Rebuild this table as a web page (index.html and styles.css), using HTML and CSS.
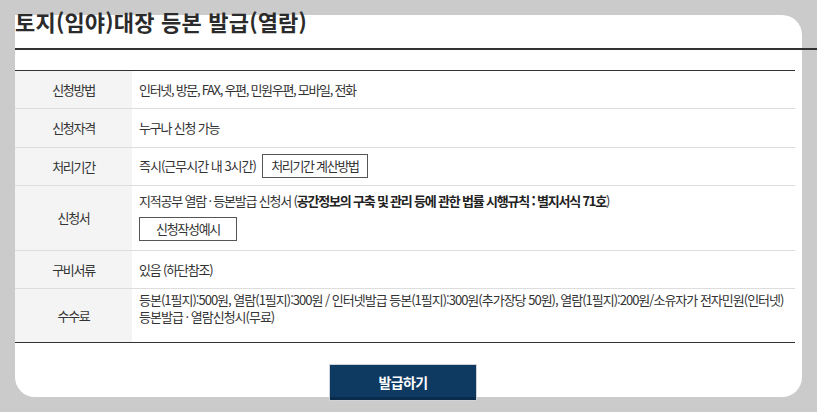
FILE: index.html
```html
<!DOCTYPE html>
<html lang="ko">
<head>
<meta charset="utf-8">
<title>토지(임야)대장 등본 발급(열람)</title>
<link rel="stylesheet" href="styles.css">
</head>
<body>
<div class="card">
  <h2 class="title">토지(임야)대장 등본 발급(열람)</h2>
  <table class="info">
    <tr>
      <th>신청방법</th>
      <td class="tight">인터넷, 방문, FAX, 우편, 민원우편, 모바일, 전화</td>
    </tr>
    <tr>
      <th>신청자격</th>
      <td>누구나 신청 가능</td>
    </tr>
    <tr>
      <th>처리기간</th>
      <td class="with-btn">
        <div class="inline-row">
          <span class="loose">즉시(근무시간 내 3시간)</span>
          <button class="small-btn calc">처리기간 계산방법</button>
        </div>
      </td>
    </tr>
    <tr>
      <th>신청서</th>
      <td class="form">
        <div class="form-line">지적공부 열람 · 등본발급 신청서 (<strong>공간정보의 구축 및 관리 등에 관한 법률 시행규칙 : 별지서식 71호</strong>)</div>
        <button class="small-btn example">신청작성예시</button>
      </td>
    </tr>
    <tr>
      <th>구비서류</th>
      <td>있음 (하단참조)</td>
    </tr>
    <tr class="last">
      <th>수수료</th>
      <td class="fee">등본(1필지):500원, 열람(1필지):300원 / 인터넷발급 등본(1필지):300원(추가장당 50원), 열람(1필지):200원/소유자가 전자민원(인터넷)<br>등본발급 · 열람신청시(무료)</td>
    </tr>
  </table>
  <div class="actions">
    <button class="issue">발급하기</button>
  </div>
</div>
</body>
</html>
```

FILE: styles.css
```css
html, body {
  margin: 0;
  padding: 0;
}

body {
  background: #cbcbcb;
  font-family: "Noto Sans CJK KR", "Noto Sans", sans-serif;
  color: #333;
  width: 817px;
  height: 412px;
  overflow: hidden;
}

.card {
  display: flex;
  flex-direction: column;
  margin: 15px 0 0 15px;
  width: 787px;
  height: 382px;
  background: #fff;
  border-radius: 0 20px 20px 20px;
}

.title {
  margin: -9px -15px 0 0;
  padding: 0 0 12px 0;
  font-size: 22px;
  line-height: 30px;
  font-weight: 700;
  letter-spacing: 0.2px;
  color: #2b2b2b;
  border-bottom: 2px solid #333;
}

.info {
  margin-top: 20px;
  width: 780px;
  border-collapse: separate;
  border-spacing: 0;
  border-top: 1px solid #333;
  font-size: 13px;
  letter-spacing: -1.2px;
}

.info th,
.info td {
  border-bottom: 1px solid #ddd;
  line-height: 17.4px;
  padding: 10px 7px;
  vertical-align: middle;
}

.info th {
  width: 103px;
  background: #f4f4f4;
  font-weight: 400;
  text-align: center;
  color: #333;
  letter-spacing: -1.3px;
}

.info td {
  text-align: left;
  color: #333;
}

.info td.tight {
  letter-spacing: -1.3px;
}

.loose {
  letter-spacing: -1px;
}

.info tr.last th,
.info tr.last td {
  border-bottom-color: #333;
}

.info strong {
  font-weight: 700;
  color: #222;
}

.info td.with-btn {
  padding: 6px 7px 7.4px;
}

.inline-row {
  display: flex;
  align-items: center;
  gap: 6px;
  height: 24px;
}

.small-btn {
  box-sizing: border-box;
  height: 24px;
  padding: 0;
  background: #fff;
  border: 1px solid #555;
  font-family: inherit;
  font-size: 13px;
  letter-spacing: -1.3px;
  color: #333;
  line-height: 22px;
  text-align: center;
}

.small-btn.calc {
  width: 106px;
}

.small-btn.example {
  width: 98px;
  margin-top: 7px;
  display: block;
}

.info td.form {
  padding: 6px 7px 8.3px;
}

.form-line {
  line-height: 18px;
}

.info td.fee {
  padding: 2px 7px 16px;
  line-height: 17.5px;
  letter-spacing: -1px;
}

.actions {
  width: 776px;
  margin-top: 21px;
  display: flex;
  justify-content: center;
}

.issue {
  box-sizing: border-box;
  width: 148px;
  height: 37px;
  padding: 0;
  border: 1px solid #cfd3d7;
  background: linear-gradient(to bottom, #0e3a62 0, #0e3a62 32px, #0a2c4c 32px, #0a2c4c 100%);
  color: #fff;
  font-family: inherit;
  font-size: 14px;
  font-weight: 700;
  letter-spacing: -0.6px;
  line-height: 35px;
}
```
